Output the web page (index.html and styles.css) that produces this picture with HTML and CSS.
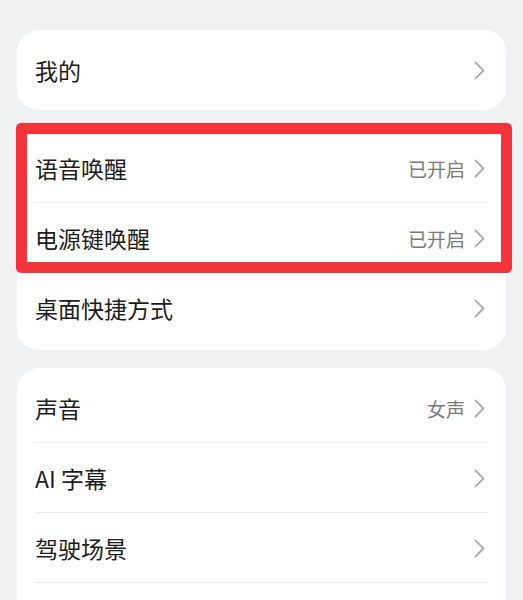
FILE: index.html
```html
<!DOCTYPE html>
<html lang="zh-CN">
<head>
  <meta charset="UTF-8" />
  <title>设置</title>
  <link rel="stylesheet" href="styles.css">
</head>
<body>
  <div class="page">
    <div class="card">
      <div class="row">
        <span class="label">我的</span>
        <span class="right"><svg class="chev" viewBox="0 0 11 19"><polyline points="1.5,1.5 9.5,9.5 1.5,17.5" /></svg></span>
      </div>
    </div>

    <div class="card card-marked">
      <div class="row line">
        <span class="label">语音唤醒</span>
        <span class="right"><span class="value">已开启</span><svg class="chev" viewBox="0 0 11 19"><polyline points="1.5,1.5 9.5,9.5 1.5,17.5" /></svg></span>
      </div>
      <div class="row line">
        <span class="label">电源键唤醒</span>
        <span class="right"><span class="value">已开启</span><svg class="chev" viewBox="0 0 11 19"><polyline points="1.5,1.5 9.5,9.5 1.5,17.5" /></svg></span>
      </div>
      <div class="row">
        <span class="label">桌面快捷方式</span>
        <span class="right"><svg class="chev" viewBox="0 0 11 19"><polyline points="1.5,1.5 9.5,9.5 1.5,17.5" /></svg></span>
      </div>
      <div class="mark"></div>
    </div>

    <div class="card card-last">
      <div class="row line">
        <span class="label">声音</span>
        <span class="right"><span class="value">女声</span><svg class="chev" viewBox="0 0 11 19"><polyline points="1.5,1.5 9.5,9.5 1.5,17.5" /></svg></span>
      </div>
      <div class="row line">
        <span class="label">AI 字幕</span>
        <span class="right"><svg class="chev" viewBox="0 0 11 19"><polyline points="1.5,1.5 9.5,9.5 1.5,17.5" /></svg></span>
      </div>
      <div class="row line">
        <span class="label">驾驶场景</span>
        <span class="right"><svg class="chev" viewBox="0 0 11 19"><polyline points="1.5,1.5 9.5,9.5 1.5,17.5" /></svg></span>
      </div>
    </div>
  </div>
</body>
</html>
```

FILE: styles.css
```css
* {
  box-sizing: border-box;
  margin: 0;
  padding: 0;
}

body {
  background: #f1f2f4;
  font-family: "Noto Sans CJK SC", "Noto Sans", sans-serif;
  color: #1c1c1c;
  overflow: hidden;
  height: 600px;
}

.page {
  display: flex;
  flex-direction: column;
  gap: 18px;
  padding: 30px 17px 0 17px;
}

.card {
  background: #fff;
  border-radius: 22px;
  padding: 5px 0;
}

.card-marked {
  position: relative;
  padding-bottom: 7px;
}

.card-last {
  min-height: 260px;
}

.row {
  height: 70px;
  display: flex;
  align-items: center;
  justify-content: space-between;
  padding: 0 21px 0 18px;
  position: relative;
}

.row.line::after {
  content: "";
  position: absolute;
  left: 17px;
  right: 18px;
  bottom: 0;
  height: 1px;
  background: #ebebeb;
}

.label {
  font-size: 23px;
  line-height: 1;
}

.right {
  display: flex;
  align-items: center;
  gap: 9px;
}

.value {
  font-size: 19px;
  color: #7a7a7a;
  line-height: 1;
}

.chev {
  width: 11px;
  height: 19px;
  fill: none;
  stroke: #acacac;
  stroke-width: 1.8;
  stroke-linecap: round;
  stroke-linejoin: round;
}

/* red annotation box over the first two rows */
.mark {
  position: absolute;
  left: -1px;
  top: -5px;
  width: 496px;
  height: 150px;
  border: 11px solid #f5333a;
  border-radius: 5px;
}
```
